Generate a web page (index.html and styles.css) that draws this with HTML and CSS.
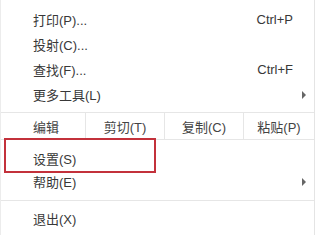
FILE: index.html
```html
<!DOCTYPE html>
<html lang="zh-CN">
<head>
  <meta charset="UTF-8" />
  <title>菜单</title>
  <link rel="stylesheet" href="styles.css">
</head>
<body>

<div class="menu">
  <div class="group top">
    <div class="item"><span class="label">打印(P)...</span><span class="key">Ctrl+P</span></div>
    <div class="item"><span class="label">投射(C)...</span></div>
    <div class="item"><span class="label">查找(F)...</span><span class="key">Ctrl+F</span></div>
    <div class="item"><span class="label">更多工具(L)</span><span class="arrow"></span></div>
  </div>

  <div class="edit-row">
    <div class="cell first">编辑</div>
    <div class="cell">剪切(T)</div>
    <div class="cell">复制(C)</div>
    <div class="cell last">粘贴(P)</div>
  </div>

  <div class="group mid">
    <div class="item item-small marked"><span class="label">设置(S)</span></div>
    <div class="item item-small"><span class="label">帮助(E)</span><span class="arrow"></span></div>
  </div>

  <div class="group bottom">
    <div class="item"><span class="label">退出(X)</span></div>
  </div>
</div>

</body>
</html>
```

FILE: styles.css
```css
body {
  margin: 0;
  background: #fff;
  font-family: "Liberation Sans", "Noto Sans CJK SC", sans-serif;
  font-size: 13px;
  color: #383838;
}

.menu {
  width: 315px;
  height: 235px;
  border-left: 1px solid #ececec;
  border-right: 1px solid #e4e4e4;
  box-sizing: border-box;
  background: #fff;
}

.group.top {
  padding: 7px 0 5px;
}

.group.mid {
  padding: 7px 0 7px;
  border-bottom: 1px solid #e6e6e6;
}

.group.bottom {
  padding-top: 5px;
}

.item {
  height: 25px;
  display: flex;
  align-items: center;
  padding: 0 21px 0 32px;
  position: relative;
}

.item-small {
  height: 23px;
}

.label {
  flex: 1;
}

.arrow {
  width: 0;
  height: 0;
  border-top: 4px solid transparent;
  border-bottom: 4px solid transparent;
  border-left: 4px solid #666;
  margin-right: -13px;
}

/* red annotation box around 设置 */
.marked::after {
  content: "";
  position: absolute;
  left: 3px;
  top: -9px;
  width: 148px;
  height: 31px;
  border: 2px solid #c3313b;
}

.edit-row {
  display: flex;
  height: 26px;
  border-top: 1px solid #e6e6e6;
  border-bottom: 1px solid #e6e6e6;
}

.cell {
  width: 78px;
  display: flex;
  align-items: center;
  justify-content: center;
  border-left: 1px solid #e6e6e6;
  color: #444;
}

.cell.first {
  width: 84px;
  border-left: none;
  justify-content: flex-start;
  padding-left: 32px;
  box-sizing: border-box;
}

.cell.last {
  flex: 1;
}
```
